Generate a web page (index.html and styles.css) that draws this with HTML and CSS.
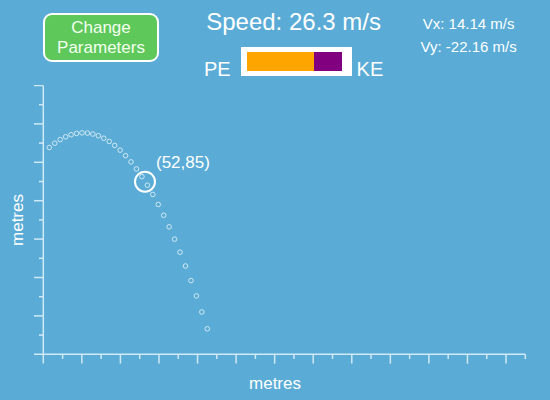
FILE: index.html
```html
<!DOCTYPE html>
<html>
<head>
<meta charset="utf-8">
<link rel="stylesheet" href="styles.css">
</head>
<body>
<div class="page">
  <header class="top">
    <button class="change-btn">Change<br>Parameters</button>
    <div class="energy">
      <div class="speed">Speed: 26.3 m/s</div>
      <div class="bar-row">
        <span class="pe">PE</span>
        <div class="bar"><div class="bar-pe"></div><div class="bar-ke"></div></div>
        <span class="ke">KE</span>
      </div>
    </div>
    <div class="velocity">
      <div>Vx: 14.14 m/s</div>
      <div>Vy: -22.16 m/s</div>
    </div>
  </header>
  <svg class="chart" width="550" height="315" viewBox="0 85 550 315">
    <g class="axis">
      <line x1="43.3" y1="85.5" x2="43.3" y2="363.6"/>
      <line x1="34" y1="354.3" x2="525.3" y2="354.3"/>
      <!-- y ticks -->
      <line x1="39" y1="335.1" x2="43.3" y2="335.1"/>
      <line x1="34" y1="315.9" x2="43.3" y2="315.9"/>
      <line x1="39" y1="296.7" x2="43.3" y2="296.7"/>
      <line x1="34" y1="277.5" x2="43.3" y2="277.5"/>
      <line x1="39" y1="258.3" x2="43.3" y2="258.3"/>
      <line x1="34" y1="239.1" x2="43.3" y2="239.1"/>
      <line x1="39" y1="219.9" x2="43.3" y2="219.9"/>
      <line x1="34" y1="200.7" x2="43.3" y2="200.7"/>
      <line x1="39" y1="181.5" x2="43.3" y2="181.5"/>
      <line x1="34" y1="162.3" x2="43.3" y2="162.3"/>
      <line x1="39" y1="143.1" x2="43.3" y2="143.1"/>
      <line x1="34" y1="123.9" x2="43.3" y2="123.9"/>
      <line x1="39" y1="104.7" x2="43.3" y2="104.7"/>
      <line x1="34" y1="85.5" x2="43.3" y2="85.5"/>
      <!-- x ticks -->
      <line x1="62.58" y1="354.3" x2="62.58" y2="359"/>
      <line x1="81.86" y1="354.3" x2="81.86" y2="363.6"/>
      <line x1="101.14" y1="354.3" x2="101.14" y2="359"/>
      <line x1="120.42" y1="354.3" x2="120.42" y2="363.6"/>
      <line x1="139.7" y1="354.3" x2="139.7" y2="359"/>
      <line x1="158.98" y1="354.3" x2="158.98" y2="363.6"/>
      <line x1="178.26" y1="354.3" x2="178.26" y2="359"/>
      <line x1="197.54" y1="354.3" x2="197.54" y2="363.6"/>
      <line x1="216.82" y1="354.3" x2="216.82" y2="359"/>
      <line x1="236.1" y1="354.3" x2="236.1" y2="363.6"/>
      <line x1="255.38" y1="354.3" x2="255.38" y2="359"/>
      <line x1="274.66" y1="354.3" x2="274.66" y2="363.6"/>
      <line x1="293.94" y1="354.3" x2="293.94" y2="359"/>
      <line x1="313.22" y1="354.3" x2="313.22" y2="363.6"/>
      <line x1="332.5" y1="354.3" x2="332.5" y2="359"/>
      <line x1="351.78" y1="354.3" x2="351.78" y2="363.6"/>
      <line x1="371.06" y1="354.3" x2="371.06" y2="359"/>
      <line x1="390.34" y1="354.3" x2="390.34" y2="363.6"/>
      <line x1="409.62" y1="354.3" x2="409.62" y2="359"/>
      <line x1="428.9" y1="354.3" x2="428.9" y2="363.6"/>
      <line x1="448.18" y1="354.3" x2="448.18" y2="359"/>
      <line x1="467.46" y1="354.3" x2="467.46" y2="363.6"/>
      <line x1="486.74" y1="354.3" x2="486.74" y2="359"/>
      <line x1="506.02" y1="354.3" x2="506.02" y2="363.6"/>
      <line x1="525.3" y1="354.3" x2="525.3" y2="359"/>
    </g>
    <g class="dots">
      <circle cx="49.3" cy="147.5" r="2.3"/>
      <circle cx="54.75" cy="143.17" r="2.3"/>
      <circle cx="60.19" cy="139.59" r="2.3"/>
      <circle cx="65.64" cy="136.77" r="2.3"/>
      <circle cx="71.09" cy="134.71" r="2.3"/>
      <circle cx="76.54" cy="133.4" r="2.3"/>
      <circle cx="81.99" cy="132.85" r="2.3"/>
      <circle cx="87.44" cy="133.05" r="2.3"/>
      <circle cx="92.88" cy="134.01" r="2.3"/>
      <circle cx="98.33" cy="135.73" r="2.3"/>
      <circle cx="103.78" cy="138.2" r="2.3"/>
      <circle cx="109.23" cy="141.43" r="2.3"/>
      <circle cx="114.68" cy="145.41" r="2.3"/>
      <circle cx="120.12" cy="150.15" r="2.3"/>
      <circle cx="125.57" cy="155.65" r="2.3"/>
      <circle cx="131.02" cy="161.9" r="2.3"/>
      <circle cx="136.47" cy="168.91" r="2.3"/>
      <circle cx="141.92" cy="176.67" r="2.3"/>
      <circle cx="147.36" cy="185.19" r="2.3"/>
      <circle cx="152.81" cy="194.47" r="2.3"/>
      <circle cx="158.26" cy="204.5" r="2.3"/>
      <circle cx="163.71" cy="215.29" r="2.3"/>
      <circle cx="169.16" cy="226.83" r="2.3"/>
      <circle cx="174.6" cy="239.13" r="2.3"/>
      <circle cx="180.05" cy="252.19" r="2.3"/>
      <circle cx="185.5" cy="266.0" r="2.3"/>
      <circle cx="190.95" cy="280.57" r="2.3"/>
      <circle cx="196.4" cy="295.89" r="2.3"/>
      <circle cx="201.84" cy="311.97" r="2.3"/>
      <circle cx="207.29" cy="328.8" r="2.3"/>
    </g>
    <circle class="marker" cx="145" cy="181.7" r="10"/>
    <text class="coord" x="156" y="167.7">(52,85)</text>
    <text class="axis-label" x="275" y="389" text-anchor="middle">metres</text>
    <text class="axis-label" transform="translate(22.7,220) rotate(-90)" text-anchor="middle">metres</text>
  </svg>
</div>
</body>
</html>
```
FILE: styles.css
```css
html, body {
  margin: 0;
  padding: 0;
  background: #5aacd6;
}
.page {
  width: 550px;
  height: 400px;
  overflow: hidden;
  font-family: "Liberation Sans", Arial, sans-serif;
  color: #fff;
}
.top {
  display: flex;
  align-items: flex-start;
  height: 85px;
  padding-left: 43px;
  box-sizing: border-box;
}
.change-btn {
  margin-top: 13px;
  width: 116px;
  height: 49px;
  box-sizing: border-box;
  border: 2px solid #fff;
  border-radius: 9px;
  background: #5ec85a;
  color: #f4fff0;
  font-family: "Liberation Sans", Arial, sans-serif;
  font-size: 17px;
  line-height: 20px;
  padding: 0;
  text-align: center;
}
.energy {
  width: 200px;
  margin-left: 34.6px;
  padding-top: 8px;
  text-align: center;
}
.speed {
  font-size: 24px;
  line-height: 28px;
}
.bar-row {
  display: flex;
  justify-content: center;
  align-items: flex-end;
  margin-top: 11px;
}
.pe, .ke {
  font-size: 20px;
  line-height: 20px;
  margin-bottom: -3.4px;
}
.pe { margin-right: 10px; }
.ke { margin-left: 5px; }
.bar {
  display: flex;
  width: 100px;
  height: 19px;
  padding: 5px 5px 5px 6px;
  background: #fff;
}
.bar-pe {
  width: 67px;
  background: #ffa500;
}
.bar-ke {
  width: 28px;
  background: #800080;
}
.velocity {
  width: 100px;
  margin-left: 25px;
  padding-top: 11.6px;
  text-align: center;
  font-size: 15px;
  line-height: 23.4px;
}
.chart {
  display: block;
}
.axis line {
  stroke: #cfe9f6;
  stroke-width: 1.5;
}
.dots circle {
  fill: none;
  stroke: #cfe8f4;
  stroke-width: 1;
}
.marker {
  fill: none;
  stroke: #fff;
  stroke-width: 2;
}
.coord {
  fill: #fff;
  font-family: "Liberation Sans", Arial, sans-serif;
  font-size: 17px;
}
.axis-label {
  fill: #fff;
  font-family: "Liberation Sans", Arial, sans-serif;
  font-size: 17px;
}
```
